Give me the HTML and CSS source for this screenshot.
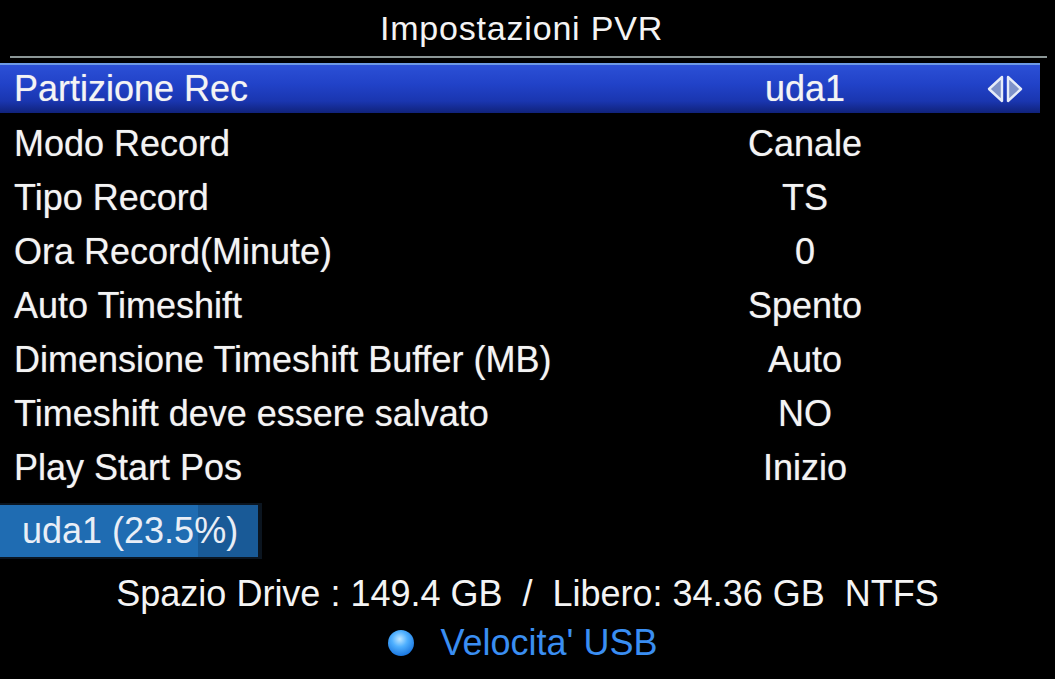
FILE: index.html
```html
<!DOCTYPE html>
<html lang="it">
<head>
    <meta charset="UTF-8">
    <meta name="viewport" content="width=device-width, initial-scale=1.0">
    <title>Impostazioni PVR</title>
    <link rel="stylesheet" href="styles.css">
</head>
<body>
    <div class="screen">
        <h1 class="title">Impostazioni PVR</h1>
        <div class="divider"></div>

        <ul class="menu">
            <li class="menu-row selected">
                <span class="label">Partizione Rec</span>
                <span class="value">uda1</span>
                <span class="arrows">
                    <svg width="38" height="30" viewBox="0 0 38 30">
                        <path d="M16 3 L3 15 L16 27 Z" fill="#7f93c9" stroke="#e6ecf8" stroke-width="2.4" stroke-linejoin="round"/>
                        <path d="M22 3 L35 15 L22 27 Z" fill="#7f93c9" stroke="#e6ecf8" stroke-width="2.4" stroke-linejoin="round"/>
                    </svg>
                </span>
            </li>
            <li class="menu-row">
                <span class="label">Modo Record</span>
                <span class="value">Canale</span>
            </li>
            <li class="menu-row">
                <span class="label">Tipo Record</span>
                <span class="value">TS</span>
            </li>
            <li class="menu-row">
                <span class="label">Ora Record(Minute)</span>
                <span class="value">0</span>
            </li>
            <li class="menu-row">
                <span class="label">Auto Timeshift</span>
                <span class="value">Spento</span>
            </li>
            <li class="menu-row">
                <span class="label">Dimensione Timeshift Buffer (MB)</span>
                <span class="value">Auto</span>
            </li>
            <li class="menu-row">
                <span class="label">Timeshift deve essere salvato</span>
                <span class="value">NO</span>
            </li>
            <li class="menu-row">
                <span class="label">Play Start Pos</span>
                <span class="value">Inizio</span>
            </li>
        </ul>

        <div class="usage-frame">
            <div class="usage-bar">uda1 (23.5%)</div>
        </div>

        <p class="drive-info">Spazio Drive : 149.4 GB  /  Libero: 34.36 GB  NTFS</p>

        <div class="usb-speed">
            <span class="led"></span>
            <span>Velocita' USB</span>
        </div>
    </div>
</body>
</html>
```

FILE: styles.css
```css
body {
    margin: 0;
    background-color: #000;
    font-family: "Liberation Sans", Arial, sans-serif;
    color: #f4f4f4;
}
.screen {
    width: 1055px;
    height: 679px;
    overflow: hidden;
    background-color: #000;
}
.title {
    margin: 0;
    height: 56px;
    line-height: 56px;
    font-size: 34px;
    font-weight: normal;
    letter-spacing: 0.8px;
    text-align: center;
    padding-right: 12px;
}
.divider {
    height: 2px;
    margin: 0 8px 0 10px;
    background-color: #8b9696;
}
.menu {
    list-style: none;
    margin: 5px 0 0 0;
    padding: 0;
}
.menu-row {
    display: grid;
    grid-template-columns: 640px 300px 1fr;
    align-items: center;
    width: 1040px;
    height: 54px;
    padding-left: 15px;
    box-sizing: border-box;
    font-size: 36px;
    text-shadow: 0 0 1px rgba(255, 255, 255, 0.5);
}
.menu-row.selected {
    height: 50px;
    margin-bottom: 4px;
    border-top: 2px solid #6d9ae6;
    background: linear-gradient(to bottom, #2c50d6 0%, #2142c8 40%, #1a36b0 75%, #10227a 100%);
}
.label {
    white-space: nowrap;
    margin-left: -1px;
}
.value {
    text-align: center;
}
.arrows {
    display: flex;
    margin-left: 31px;
}
.usage-frame {
    width: 262px;
    margin-top: 8px;
    padding: 2px 4px 2px 0;
    box-sizing: border-box;
    background-color: #0b1520;
}
.usage-bar {
    height: 52px;
    line-height: 52px;
    padding-left: 22px;
    font-size: 36px;
    color: #e9eef6;
    background: linear-gradient(to right, #1f6cb2 0, #1f6cb2 198px, #195a97 198px);
}
.drive-info {
    margin: 10px 0 0 0;
    height: 50px;
    line-height: 50px;
    font-size: 36px;
    text-align: center;
    white-space: pre;
}
.usb-speed {
    display: flex;
    align-items: center;
    justify-content: center;
    gap: 27px;
    height: 48px;
    font-size: 36px;
    color: #3a8ef2;
    padding-right: 10px;
}
.led {
    width: 26px;
    height: 26px;
    border-radius: 50%;
    background: radial-gradient(circle at 45% 35%, #bfe6ff 0%, #4fb0ff 35%, #1c78e0 75%, #0f4fa8 100%);
}
```
